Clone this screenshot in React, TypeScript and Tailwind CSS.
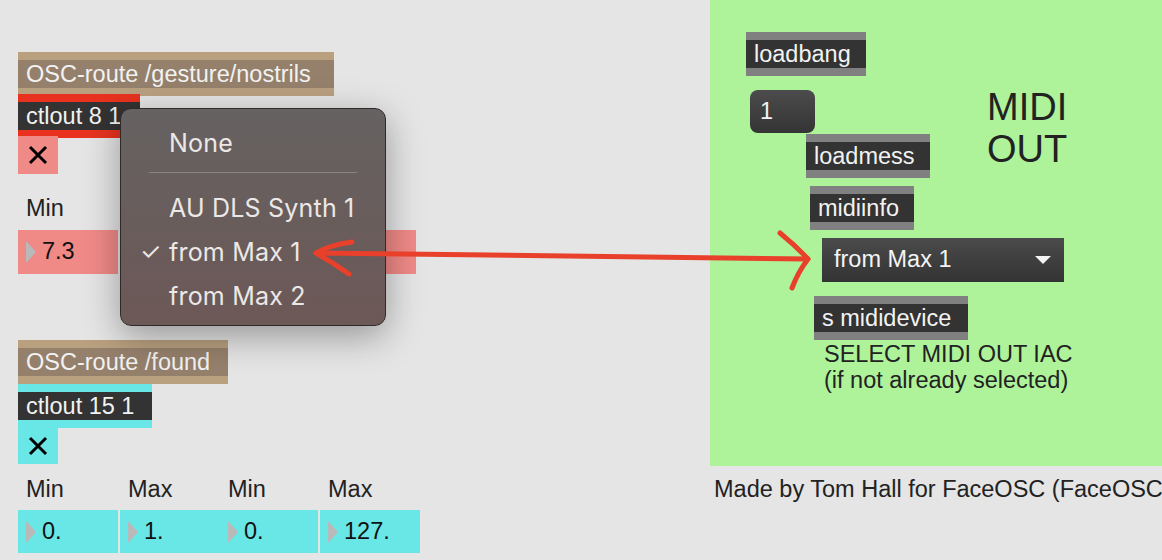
import React from "react";

type ObjProps = {
  x: number;
  y: number;
  w: number;
  text: string;
  strip: string;
  body: string;
};

// max object box: inlet strip, dark body, outlet strip
function ObjBox({ x, y, w, text, strip, body }: ObjProps) {
  return (
    <div className="absolute flex flex-col" style={{ left: x, top: y, width: w }}>
      <div className={`h-[8px] ${strip}`} />
      <div className={`h-[28px] pl-[8px] leading-[28px] whitespace-nowrap overflow-hidden text-[#f2f2f2] ${body}`}>
        {text}
      </div>
      <div className={`h-[8px] ${strip}`} />
    </div>
  );
}

type Cell = { label?: string; value?: string; w: number };

// a row of number boxes with labels above, laid out in flow
function NumRow({ x, y, cells, bg, h, gap }: { x: number; y: number; cells: Cell[]; bg: string; h: number; gap: number }) {
  return (
    <div className="absolute flex items-end" style={{ left: x, top: y }}>
      {cells.map((c, i) => (
        <div key={i} className="flex flex-col" style={{ width: c.w, marginLeft: i === 0 ? 0 : i === 2 ? 0 : 2, rowGap: gap }}>
          <div className="h-[26px] pl-[8px] leading-[26px] text-[#222]">{c.label ?? ""}</div>
          <div className={`flex items-center ${bg}`} style={{ height: h }}>
            <svg width="10" height="22" viewBox="0 0 10 22" className="ml-[8px] shrink-0">
              <polygon points="0,0 10,11 0,22" fill="#b9b9b9" />
            </svg>
            <span className="ml-[6px] text-[#111] leading-none">{c.value}</span>
          </div>
        </div>
      ))}
    </div>
  );
}

function Toggle({ x, y, h, bg }: { x: number; y: number; h: number; bg: string }) {
  return (
    <div className={`absolute flex items-center justify-center ${bg}`} style={{ left: x, top: y, width: 40, height: h }}>
      <svg width="20" height="20" viewBox="0 0 20 20">
        <path d="M2 2 L18 18 M18 2 L2 18" stroke="#000" strokeWidth="3" />
      </svg>
    </div>
  );
}

const tanStrip = "bg-[#b9a07f]";
const tanBody = "bg-[#95806c]";
const grayStrip = "bg-[#808080]";
const darkBody = "bg-[#333333]";

const menuItems = [
  { text: "AU DLS Synth 1", checked: false },
  { text: "from Max 1", checked: true },
  { text: "from Max 2", checked: false },
];

export default function App() {
  return (
    <div className="relative w-[1162px] h-[560px] overflow-hidden bg-[#e5e5e5] font-['Liberation_Sans',Arial,sans-serif] text-[23.5px]">
      {/* green midi panel */}
      <div className="absolute left-[710px] top-0 w-[452px] h-[466px] bg-[#aef29a]" />

      {/* left column, nostrils */}
      <ObjBox x={18} y={52} w={316} text="OSC-route /gesture/nostrils" strip={tanStrip} body={tanBody} />
      <ObjBox x={18} y={94} w={122} text="ctlout 8 1" strip="bg-[#e8321f]" body={darkBody} />
      <Toggle x={18} y={136} h={38} bg="bg-[#f08a87]" />
      <NumRow
        x={18}
        y={195}
        h={44}
        gap={9}
        bg="bg-[#f08a87]"
        cells={[
          { label: "Min", value: "7.3", w: 100 },
          { w: 100 },
          { w: 98 },
          { w: 96 },
        ]}
      />

      {/* left column, found */}
      <ObjBox x={18} y={340} w={210} text="OSC-route /found" strip={tanStrip} body={tanBody} />
      <ObjBox x={18} y={384} w={134} text="ctlout 15 1" strip="bg-[#69e6e6]" body={darkBody} />
      <Toggle x={18} y={428} h={36} bg="bg-[#69e6e6]" />
      <NumRow
        x={18}
        y={476}
        h={43}
        gap={8}
        bg="bg-[#69e6e6]"
        cells={[
          { label: "Min", value: "0.", w: 100 },
          { label: "Max", value: "1.", w: 100 },
          { label: "Min", value: "0.", w: 98 },
          { label: "Max", value: "127.", w: 100 },
        ]}
      />

      {/* right panel objects */}
      <ObjBox x={746} y={32} w={120} text="loadbang" strip={grayStrip} body={darkBody} />
      <div className="absolute left-[750px] top-[90px] w-[65px] h-[43px] rounded-[8px] bg-gradient-to-b from-[#4c4c4c] to-[#343434] pl-[10px] leading-[43px] text-[#f2f2f2]">
        1
      </div>
      <ObjBox x={806} y={134} w={124} text="loadmess" strip={grayStrip} body={darkBody} />
      <div className="absolute left-[987px] top-[86px] text-[38px] leading-[42px] text-[#222]">
        <div>MIDI</div>
        <div>OUT</div>
      </div>
      <ObjBox x={810} y={186} w={104} text="midiinfo" strip={grayStrip} body={darkBody} />
      <div className="absolute left-[822px] top-[238px] w-[242px] h-[44px] flex items-center justify-between bg-gradient-to-b from-[#4b4b4b] to-[#333] pl-[12px] pr-[13px] text-[#f4f4f4]">
        <span>from Max 1</span>
        <svg width="16" height="8" viewBox="0 0 16 8">
          <polygon points="0,0 16,0 8,8" fill="#f4f4f4" />
        </svg>
      </div>
      <ObjBox x={814} y={296} w={154} text="s mididevice" strip={grayStrip} body={darkBody} />
      <div className="absolute left-[824px] top-[341px] leading-[26px] text-[#222]">
        <div>SELECT MIDI OUT IAC</div>
        <div>(if not already selected)</div>
      </div>

      <div className="absolute left-[714px] top-[476px] leading-[26px] whitespace-nowrap text-[#222]">
        Made by Tom Hall for FaceOSC (FaceOSC
      </div>

      {/* popup menu */}
      <div className="absolute left-[120px] top-[108px] w-[266px] h-[218px] rounded-[11px] border border-[#2e2a2a] bg-gradient-to-b from-[#656261] to-[#6c5857] shadow-[0_10px_36px_rgba(0,0,0,0.35)] pt-[12px] font-['Inter',sans-serif] text-[25px] tracking-[0.2px] text-[#ece8e6]">
        <div className="h-[44px] leading-[44px] pl-[48px]">None</div>
        <div className="mx-[28px] mt-[7px] mb-[13px] h-px bg-[#8c8381]" />
        {menuItems.map((item) => (
          <div key={item.text} className="flex h-[44px] items-center leading-[44px]">
            <span className="w-[48px] pl-[19px] text-[24px]">{item.checked ? "✓" : ""}</span>
            <span>{item.text}</span>
          </div>
        ))}
      </div>

      {/* hand drawn arrow */}
      <svg className="absolute left-0 top-0 pointer-events-none" width="1162" height="560" viewBox="0 0 1162 560">
        <g fill="none" stroke="#e8402a" strokeWidth="5" strokeLinecap="round" strokeLinejoin="round">
          <path d="M316 253 C 450 254, 600 256, 808 259" />
          <path d="M352 242 Q 330 245 316 253 Q 332 262 349 274" />
          <path d="M780 233 Q 796 246 808 259 Q 798 272 792 288" />
        </g>
      </svg>
    </div>
  );
}
